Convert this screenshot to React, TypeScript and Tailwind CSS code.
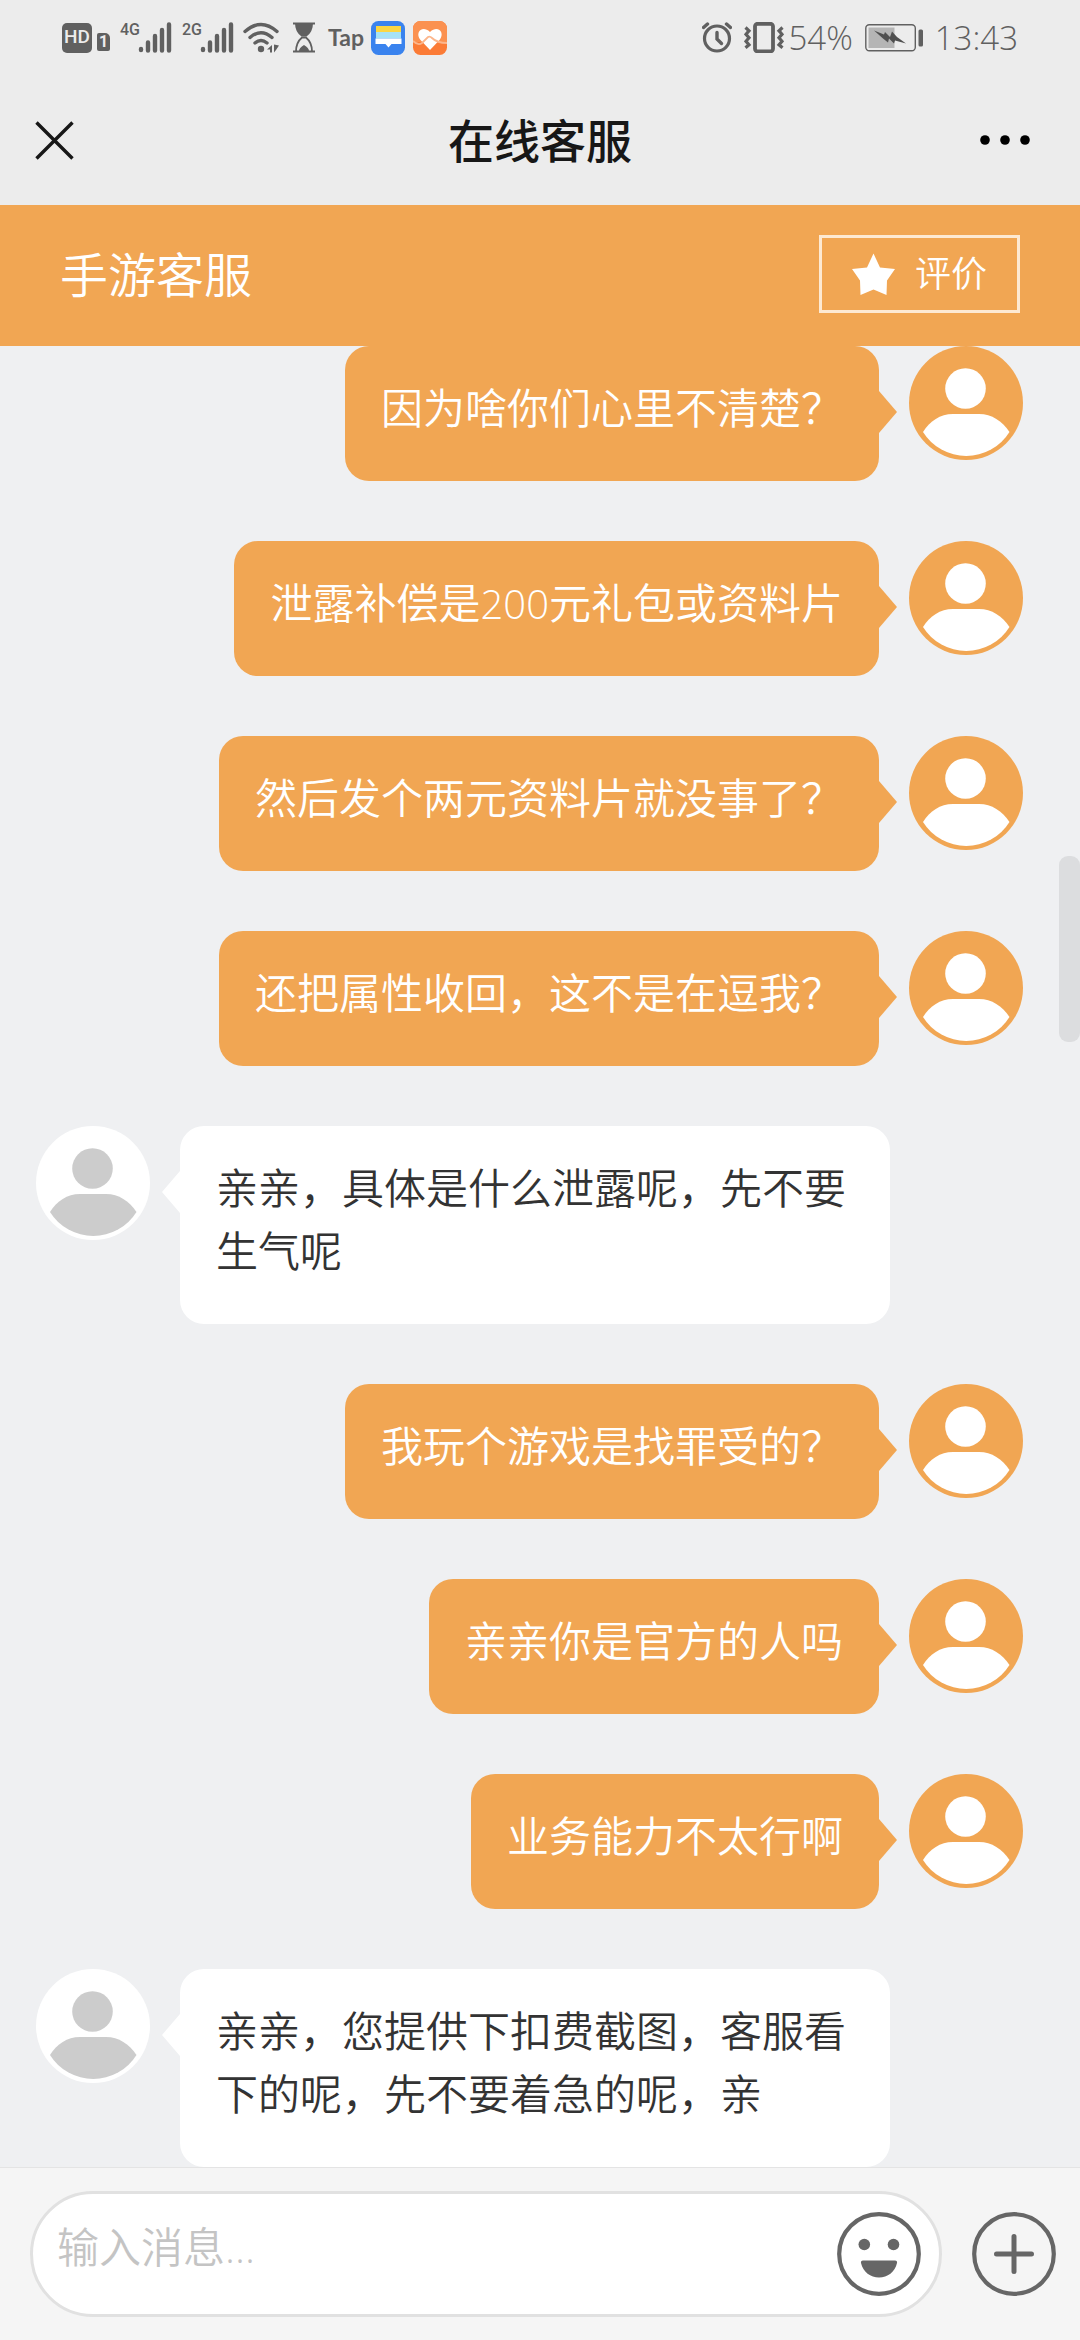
import { useState } from "react";

interface Message {
  id: number;
  from: "me" | "agent";
  text: string;
}

// \uff0c and \uff1f are the full-width comma and question mark
const messages: Message[] = [
  { id: 1, from: "me", text: "因为啥你们心里不清楚\uff1f" },
  { id: 2, from: "me", text: "泄露补偿是200元礼包或资料片" },
  { id: 3, from: "me", text: "然后发个两元资料片就没事了\uff1f" },
  { id: 4, from: "me", text: "还把属性收回\uff0c这不是在逗我\uff1f" },
  { id: 5, from: "agent", text: "亲亲\uff0c具体是什么泄露呢\uff0c先不要生气呢" },
  { id: 6, from: "me", text: "我玩个游戏是找罪受的\uff1f" },
  { id: 7, from: "me", text: "亲亲你是官方的人吗" },
  { id: 8, from: "me", text: "业务能力不太行啊" },
  { id: 9, from: "agent", text: "亲亲\uff0c您提供下扣费截图\uff0c客服看下的呢\uff0c先不要着急的呢\uff0c亲" },
];

function Signal({ label }: { label: string }) {
  return (
    <div className="flex w-[54px] justify-end">
      <span className="-mr-0.5 font-['Roboto'] text-[16px] leading-[16px] font-medium">{label}</span>
      <svg className="h-[31px] w-[34px]" viewBox="0 0 34 31" stroke="currentColor" strokeWidth="4.4" strokeLinecap="round">
        <path d="M3 28v-1M10 28.5v-8M17 28.5V14M24 28.5V8M31 28.5V2.5" />
      </svg>
    </div>
  );
}

function StatusBar() {
  return (
    <div className="flex h-[75px] items-center justify-between px-[62px] text-[#606060]">
      <div className="flex items-center gap-2">
        {/* HD + SIM 1 */}
        <div className="flex items-end gap-[5px]">
          <span className="flex h-[30px] w-[30px] items-center justify-center rounded-[5px] bg-[#606060] font-['Roboto'] text-[19px] font-medium text-[#ececec]">
            HD
          </span>
          <span className="mb-0.5 flex h-[18px] w-[13px] items-center justify-center rounded-[2px] rounded-tr-[5px] bg-[#606060] font-['Roboto'] text-[16px] leading-none font-bold text-[#ececec]">
            1
          </span>
        </div>
        <Signal label="4G" />
        <Signal label="2G" />
        {/* Wifi */}
        <svg className="h-[31px] w-[38px]" viewBox="0 0 38 31" fill="none" stroke="currentColor" strokeLinecap="round">
          <path d="M3 9.5Q19-4.5 35 9.5M8 15.5Q19 6 30 15.5M13 21Q19 16 25 21" strokeWidth="3.4" />
          <circle cx="19" cy="27" r="3.2" fill="currentColor" stroke="none" />
          <path d="M30 23v7.5h-2v-3h-3zM32 30.5v-8l5 1-3 4.5z" fill="currentColor" stroke="none" />
        </svg>
        {/* Hourglass */}
        <svg className="h-[31px] w-[32px]" viewBox="0 0 32 31" fill="none" stroke="currentColor" strokeWidth="1.8">
          <path d="M5 1.5h22M5 29.5h22" />
          <path d="M7 1h18q0 9-6.5 13.5h-5Q7 10 7 1z" fill="currentColor" stroke="none" />
          <path d="M8 29.5q0-9 6-14h4q6 5 6 14" />
          <path d="M11 29q0-3 5-6 5 3 5 6z" fill="currentColor" stroke="none" />
        </svg>
        <span className="w-[35px] font-['Lato'] text-[23px] leading-none font-bold">Tap</span>
        {/* Notes app */}
        <svg className="size-[34px]" viewBox="0 0 34 34">
          <rect width="34" height="34" rx="7.5" fill="#3a83ee" />
          <path d="M5 5h25v6H5z" fill="#fbd643" />
          <path d="M5 11h25v6.5H5z" fill="#a6e2f5" />
          <path d="M4.5 17.5h26v5.5h-10l-3 3.5-3-3.5h-10z" fill="#fff" />
        </svg>
        {/* Health app */}
        <svg className="size-[34px]" viewBox="0 0 34 34">
          <rect width="34" height="34" rx="7.5" fill="#fb7b36" />
          <path d="M0 21V7.5A7.5 7.5 0 0 1 7.5 0h19A7.5 7.5 0 0 1 34 7.5V21z" fill="#fb9150" />
          <path d="M17 29L7.5 19C1.5 12 9 3.5 17 11c8-7.5 15.5 1 9.5 8z" fill="#fff" />
          <path d="M0 20q5 5 9 2l6-6q2-1 4 1 5 5 15 5" fill="none" stroke="#fcb68c" strokeWidth="1.8" />
        </svg>
      </div>

      <div className="flex items-center gap-3">
        {/* Alarm */}
        <svg className="h-[31px] w-[30px]" viewBox="0 0 30 31" fill="none" stroke="currentColor" strokeLinecap="round">
          <circle cx="15" cy="16.5" r="12.5" strokeWidth="3.2" />
          <path d="M15 10.5v6.5l4.5 4.5" strokeWidth="3.4" />
          <path d="M1.5 5.5l4-3.5M28.5 5.5l-4-3.5" strokeWidth="3.4" />
        </svg>
        <div className="flex items-center gap-1">
          {/* Vibrate */}
          <svg className="h-[31px] w-[40px]" viewBox="0 0 40 31" fill="none" stroke="currentColor">
            <rect x="11" y="1.8" width="18" height="27.5" rx="2.5" strokeWidth="3.8" />
            <path
              d="M1.5 5.5l3.5 3.3-3 3.5 3 3.5-3 3.5 3 3.5-3.5 3M38.5 5.5L35 8.8l3 3.5-3 3.5 3 3.5-3 3.5 3.5 3"
              strokeWidth="3.2"
            />
          </svg>
          <span className="font-['Open_Sans'] text-[33px] leading-none font-light">54%</span>
        </div>
        {/* Battery */}
        <svg className="h-[28px] w-[58px]" viewBox="0 0 58 28">
          <rect x="0.8" y="0.8" width="49.5" height="26" rx="3.5" fill="none" stroke="currentColor" strokeWidth="1.4" />
          <rect x="3.5" y="3.5" width="26" height="20.5" fill="#b5b5b5" />
          <path d="M9 6.5l10 4 1-2.5 5 5 2-5.5 5 5.5 9 6.5-11-3-1 3-5-5-1 4-5-4z" fill="#505050" />
          <rect x="53.5" y="5.5" width="4.5" height="17" rx="1.5" fill="currentColor" />
        </svg>
        <span className="font-['Open_Sans'] text-[33px] leading-none font-light">13:43</span>
      </div>
    </div>
  );
}

function NavBar() {
  return (
    <div className="flex h-[130px] items-center justify-between pr-[50px] pl-[35px]">
      <button type="button" aria-label="关闭" className="flex w-[65px]">
        <svg className="size-[39px]" viewBox="0 0 39 39" stroke="#171717" strokeWidth="3.4">
          <path d="M1.5 1.5l36 36M37.5 1.5l-36 36" />
        </svg>
      </button>
      <h1 className="pb-1 text-[46px] leading-[60px] font-medium text-[#171717]">在线客服</h1>
      <button type="button" aria-label="更多" className="flex w-[50px]">
        <svg className="h-[10px] w-[50px]" viewBox="0 0 50 10" fill="#000">
          <circle cx="5" cy="5" r="4.8" />
          <circle cx="25" cy="5" r="4.8" />
          <circle cx="45" cy="5" r="4.8" />
        </svg>
      </button>
    </div>
  );
}

function Avatar({ mine }: { mine: boolean }) {
  return (
    <svg className="size-[114px] shrink-0" viewBox="0 0 114 114">
      <circle cx="57" cy="57" r="57" fill={mine ? "#f1a653" : "#ffffff"} />
      <g fill={mine ? "#ffffff" : "#cccccc"}>
        <circle cx="56.5" cy="42.5" r="20.3" />
        <path d="M14 86C21 75 31 68 44 68h26c13 0 23 7 30.5 18A51 51 0 0 1 14 86z" />
      </g>
    </svg>
  );
}

// Latin digits are set in a thinner face than the Chinese text
function MessageText({ text }: { text: string }) {
  return (
    <>
      {text.split(/(\d+)/).map((part, i) =>
        /^\d+$/.test(part) ? (
          <span key={i} className="font-['Open_Sans'] text-[40px] leading-none font-light">
            {part}
          </span>
        ) : (
          part
        )
      )}
    </>
  );
}

function ChatRow({ message }: { message: Message }) {
  const mine = message.from === "me";

  return (
    <li className={mine ? "flex flex-row-reverse items-start gap-[30px]" : "flex items-start gap-[30px]"}>
      <Avatar mine={mine} />
      <div
        className={
          mine
            ? "relative max-w-[710px] rounded-3xl bg-[#f1a653] px-9 pt-7 pb-11 text-white"
            : "relative max-w-[710px] rounded-3xl bg-white px-9 pt-7 pb-11 text-[#333333]"
        }
      >
        {/* Tail */}
        <svg
          className={
            mine
              ? "absolute top-[45px] left-full h-[42px] w-[18px] text-[#f1a653]"
              : "absolute top-[45px] right-full h-[42px] w-[18px] rotate-180 text-white"
          }
          viewBox="0 0 18 42"
          fill="currentColor"
        >
          <path d="M0 0l18 21L0 42z" />
        </svg>
        <p className="text-[42px] leading-[63px]">
          <MessageText text={message.text} />
        </p>
      </div>
    </li>
  );
}

function Composer() {
  const [value, setValue] = useState("");

  return (
    <form
      className="flex items-center gap-[30px] border-t border-[#e4e4e4] bg-[#f5f5f5] pt-[23px] pr-6 pb-[23px] pl-[30px]"
      onSubmit={(e) => e.preventDefault()}
    >
      <div className="flex h-[126px] flex-1 items-center rounded-full border-3 border-[#e1e1e1] bg-white pr-[18px] pl-6">
        <input
          type="text"
          aria-label="输入消息"
          placeholder="输入消息..."
          value={value}
          onChange={(e) => setValue(e.target.value)}
          className="h-full min-w-0 flex-1 bg-transparent pb-4 font-['Open_Sans','Noto_Sans_CJK_SC',sans-serif] text-[42px] font-[350] text-[#333333] outline-none placeholder:text-[#c4c4c4]"
        />
        <button type="button" aria-label="表情">
          <svg className="size-[84px]" viewBox="0 0 84 84" fill="#666666">
            <circle cx="42" cy="42" r="39.8" fill="none" stroke="#666666" strokeWidth="4.2" />
            <circle cx="27.3" cy="32.5" r="5.8" />
            <circle cx="56.5" cy="32.5" r="5.8" />
            <path d="M26 48.5h32q2.5 0 2 2.5C58 60 50.5 65.5 42 65.5S26 60 24 51q-.5-2.5 2-2.5z" />
          </svg>
        </button>
      </div>
      <button type="button" aria-label="更多功能">
        <svg className="size-[84px]" viewBox="0 0 84 84" fill="none" stroke="#666666" strokeLinecap="round">
          <circle cx="42" cy="42" r="39.8" strokeWidth="4.2" />
          <path d="M42 24.5v35M24.5 42h35" strokeWidth="5" />
        </svg>
      </button>
    </form>
  );
}

export default function App() {
  return (
    <div className="flex min-h-screen flex-col bg-[#eff0f2] font-['Noto_Sans_CJK_SC',sans-serif] font-[350]">
      <header>
        <div className="bg-[#ececec]">
          <StatusBar />
          <NavBar />
        </div>
        <div className="flex h-[141px] items-center justify-between bg-[#f1a653] px-[60px] pb-1 text-white">
          <h2 className="pb-1 text-[48px] leading-[72px]">手游客服</h2>
          <button
            type="button"
            className="flex h-[78px] items-center gap-5 border-3 border-[#fde9d2] px-[30px] text-[36px] leading-[54px]"
          >
            <svg className="size-[43px]" viewBox="0 0 43 43" fill="#fff">
              <path d="M21.5 1.5l6.5 14 15 1.5-8 11.5-.5 14.5-13-5.5-13 5.5L8 28.5 0 17l15-1.5z" />
            </svg>
            <span className="pb-1.5">评价</span>
          </button>
        </div>
      </header>

      <main className="relative flex-1">
        <ul className="flex flex-col gap-[60px] pr-[57px] pl-9">
          {messages.map((m) => (
            <ChatRow key={m.id} message={m} />
          ))}
        </ul>
        {/* Scroll thumb */}
        <div className="absolute top-[510px] right-0 h-[186px] w-[21px] rounded-[9px] bg-[#dcdddf]" />
      </main>

      <Composer />
    </div>
  );
}
